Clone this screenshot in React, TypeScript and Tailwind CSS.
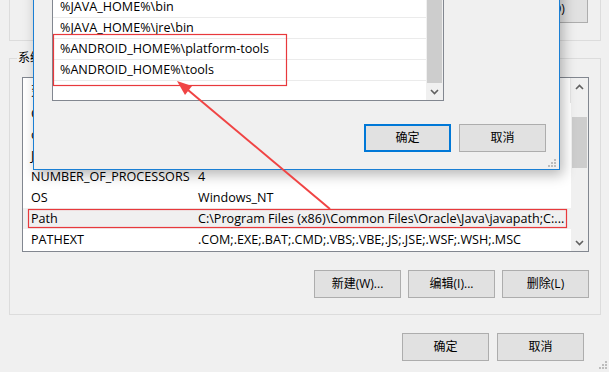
import React from "react";

function Btn({ label, focused = false, w = "w-[87px]" }: { label: string; focused?: boolean; w?: string }) {
  return (
    <div
      className={`${w} h-[28px] flex items-center justify-center bg-[#e1e1e1] text-black text-[12px] ${
        focused ? "border-2 border-[#0078d7]" : "border border-[#adadad]"
      }`}
    >
      {label}
    </div>
  );
}

function Chevron({ up }: { up?: boolean }) {
  return (
    <svg width="9" height="6" viewBox="0 0 9 6" className="block">
      {up ? (
        <path d="M1 5 L4.5 1.5 L8 5" fill="none" stroke="#606060" strokeWidth="1.6" />
      ) : (
        <path d="M1 1 L4.5 4.5 L8 1" fill="none" stroke="#606060" strokeWidth="1.6" />
      )}
    </svg>
  );
}

function Grip() {
  return (
    <svg width="9" height="9" viewBox="0 0 9 9" className="block">
      <rect x="6" y="0" width="2" height="2" fill="#bcbcbc" />
      <rect x="3" y="3" width="2" height="2" fill="#bcbcbc" />
      <rect x="6" y="3" width="2" height="2" fill="#bcbcbc" />
      <rect x="0" y="6" width="2" height="2" fill="#bcbcbc" />
      <rect x="3" y="6" width="2" height="2" fill="#bcbcbc" />
      <rect x="6" y="6" width="2" height="2" fill="#bcbcbc" />
    </svg>
  );
}

const sysRows: [string, string][] = [
  ["ComSpec", "C:\\Windows\\system32\\cmd.exe"],
  ["configsetroot", "C:\\Windows\\ConfigSetRoot"],
  ["JAVA_HOME", "C:\\Program Files\\Java\\jdk1.8.0_131"],
  ["NUMBER_OF_PROCESSORS", "4"],
  ["OS", "Windows_NT"],
  ["Path", "C:\\Program Files (x86)\\Common Files\\Oracle\\Java\\javapath;C:..."],
  ["PATHEXT", ".COM;.EXE;.BAT;.CMD;.VBS;.VBE;.JS;.JSE;.WSF;.WSH;.MSC"],
];

const pathRows = [
  "%SystemRoot%\\system32",
  "%SystemRoot%",
  "%JAVA_HOME%\\bin",
  "%JAVA_HOME%\\jre\\bin",
  "%ANDROID_HOME%\\platform-tools",
  "%ANDROID_HOME%\\tools",
  "",
];

export default function App() {
  return (
    <div className="relative w-[609px] h-[372px] overflow-hidden bg-[#f0f0f0] text-[12px] leading-[16px] text-black font-['Open_Sans','Noto_Sans_CJK_SC',sans-serif]">
      {/* Back dialog: environment variables */}
      <div className="pl-[9px] pr-[8px]">
        {/* user variables group (bottom part) */}
        <div className="h-[41px] border-x border-b border-[#dcdcdc] flex justify-end pr-[12px]">
          <div className="-mt-[5px]">
            <Btn label="删除(D)" w="w-[86px]" />
          </div>
        </div>

        {/* system variables group */}
        <fieldset className="mt-[9px] border border-[#dcdcdc] pl-[12px] pr-[11px] pt-[11px] pb-[16px]">
          <legend className="-ml-[5px] px-[1px] leading-[16px]">系统变量(S)</legend>
          <div className="h-[175px] border border-[#828790] bg-white flex overflow-hidden text-[12.6px]">
            <div className="flex-1 flex flex-col">
              <div className="h-[25px] flex items-center border-r border-[#e5e5e5]">
                <div className="w-[167px] pl-[8px] h-full flex items-center border-r border-[#e5e5e5]">变量</div>
                <div className="pl-[8px]">值</div>
              </div>
              {sysRows.map(([k, v]) => (
                <div
                  key={k}
                  className={`h-[21px] flex items-center whitespace-nowrap ${k === "Path" ? "bg-[#f0f0f0]" : ""}`}
                >
                  <div className="w-[167px] pl-[8px] shrink-0">{k}</div>
                  <div className="pl-[8px]">{v}</div>
                </div>
              ))}
            </div>
            <div className="w-[17px] bg-[#f0f0f0] flex flex-col">
              <div className="h-[17px] flex items-center justify-center">
                <Chevron up />
              </div>
              <div className="mt-[22px] h-[51px] mx-[1px] bg-[#cdcdcd]" />
              <div className="flex-1" />
              <div className="h-[17px] flex items-center justify-center">
                <Chevron />
              </div>
            </div>
          </div>
          <div className="mt-[18px] flex justify-end gap-[7px]">
            <Btn label="新建(W)..." />
            <Btn label="编辑(I)..." />
            <Btn label="删除(L)" />
          </div>
        </fieldset>

        <div className="mt-[18px] flex justify-end gap-[8px] pr-[17px]">
          <Btn label="确定" />
          <Btn label="取消" />
        </div>
      </div>
      <div className="absolute right-[1px] bottom-[2px]">
        <Grip />
      </div>

      {/* Front dialog: edit environment variable */}
      <div className="absolute left-[33px] bottom-[202px] w-[527px] bg-[#f0f0f0] border border-[#1a7fd4] shadow-[3px_5px_12px_rgba(0,0,0,0.28)] pt-[10px] pl-[18px] pr-[13px] pb-[17px]">
        <div className="w-[392px] h-[147px] border border-[#828790] bg-white flex overflow-hidden text-[12.6px]">
          <div className="flex-1 flex flex-col">
            {pathRows.map((p, i) => (
              <div
                key={i}
                className="h-[21px] shrink-0 flex items-center pl-[7px] border-b border-[#ebebeb] whitespace-nowrap"
              >
                {p}
              </div>
            ))}
          </div>
          <div className="w-[17px] bg-[#f0f0f0] flex flex-col">
            <div className="h-[17px] flex items-center justify-center">
              <Chevron up />
            </div>
            <div className="flex-1 mx-[1px] bg-[#cdcdcd]" />
            <div className="h-[17px] flex items-center justify-center">
              <Chevron />
            </div>
          </div>
        </div>
        <div className="mt-[23px] flex justify-end gap-[8px]">
          <Btn label="确定" focused />
          <Btn label="取消" />
        </div>
        <div className="absolute right-[2px] bottom-[1px]">
          <Grip />
        </div>
      </div>

      {/* Annotations */}
      <svg className="absolute inset-0 pointer-events-none" width="609" height="372" viewBox="0 0 609 372">
        <rect x="53.5" y="34.5" width="233" height="51" fill="none" stroke="#e8393c" strokeWidth="1.2" />
        <rect x="28.5" y="209.5" width="538" height="18" fill="none" stroke="#e8393c" strokeWidth="1.2" />
        <line x1="188" y1="90" x2="330" y2="209" stroke="#f04444" strokeWidth="2" />
        <polygon points="177,81 185,95 192,86" fill="#f04444" />
      </svg>
    </div>
  );
}
